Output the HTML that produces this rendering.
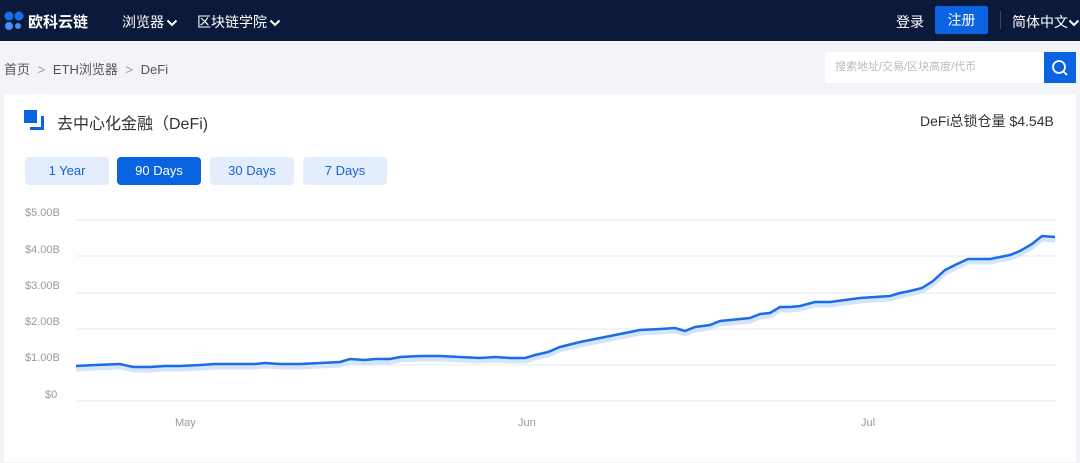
<!DOCTYPE html><html><head><meta charset="utf-8"><style>
*{margin:0;padding:0;box-sizing:border-box}
body{width:1080px;height:463px;background:#f3f4f7;font-family:"Liberation Sans","Noto Sans CJK SC",sans-serif;position:relative;overflow:hidden}
.a{position:absolute;white-space:nowrap}
.ch{display:inline-block;vertical-align:middle;margin-left:2px}
</style></head><body>
<div class="a" style="left:0;top:0;width:1080px;height:41px;background:#0b1a3b"></div>
<svg class="a" style="left:4px;top:11px" width="22" height="20"><circle cx="5" cy="5" r="4.5" fill="#1a6df0"/><circle cx="15" cy="5" r="4.5" fill="#1a6df0"/><circle cx="5" cy="15" r="4" fill="#4a8ff5"/><circle cx="14" cy="15" r="3" fill="#4a8ff5"/></svg>
<div class="a" style="left:28px;top:11px;color:#fff;font-size:15px;font-weight:bold">欧科云链</div>
<div class="a" style="left:122px;top:12px;color:#fff;font-size:14px">浏览器<svg class="ch" width="12" height="10"><path d="M1.5 2.5l4.5 4.5 4.5-4.5" stroke="#fff" stroke-width="2" fill="none"/></svg></div>
<div class="a" style="left:197px;top:12px;color:#fff;font-size:14px">区块链学院<svg class="ch" width="12" height="10"><path d="M1.5 2.5l4.5 4.5 4.5-4.5" stroke="#fff" stroke-width="2" fill="none"/></svg></div>
<div class="a" style="left:896px;top:12px;color:#fff;font-size:14px">登录</div>
<div class="a" style="left:935px;top:6px;width:53px;height:28px;background:#0a63e0;border-radius:2px;color:#fff;font-size:14px;text-align:center;line-height:28px">注册</div>
<div class="a" style="left:1000px;top:11px;width:1px;height:18px;background:#3a4660"></div>
<div class="a" style="left:1012px;top:12px;color:#fff;font-size:14px">简体中文<svg class="ch" width="12" height="10" style="margin-left:0"><path d="M1.5 2.5l4.5 4.5 4.5-4.5" stroke="#fff" stroke-width="2" fill="none"/></svg></div>
<div class="a" style="left:4px;top:59px;color:#555;font-size:13px">首页 <span style="color:#999;margin:0 4px">&gt;</span> ETH浏览器 <span style="color:#999;margin:0 4px">&gt;</span> DeFi</div>
<div class="a" style="left:825px;top:52px;width:219px;height:31px;background:#fff;color:#bbb;font-size:11px;line-height:31px;padding-left:10px">搜索地址/交易/区块高度/代币</div>
<div class="a" style="left:1044px;top:52px;width:32px;height:31px;background:#0a63e0"></div>
<svg class="a" style="left:1050px;top:58px" width="20" height="20"><circle cx="9" cy="9" r="6" stroke="#fff" stroke-width="1.8" fill="none"/><path d="M13 13l4 4" stroke="#fff" stroke-width="1.8"/></svg>
<div class="a" style="left:4px;top:94px;width:1072px;height:368px;background:#fff"></div>
<div class="a" style="left:24px;top:110px;width:13px;height:13px;background:#0a63e0"></div>
<div class="a" style="left:30px;top:116px;width:14px;height:14px;border-right:3px solid #0a63e0;border-bottom:3px solid #0a63e0"></div>
<div class="a" style="left:57px;top:110px;color:#333;font-size:16px">去中心化金融（DeFi)</div>
<div class="a" style="left:920px;top:111px;color:#333;font-size:14px">DeFi总锁仓量 $4.54B</div>
<div class="a" style="left:25px;top:157px;width:84px;height:28px;background:#e3edfb;border-radius:4px;color:#1a63d0;font-size:13px;text-align:center;line-height:28px">1 Year</div>
<div class="a" style="left:117px;top:157px;width:84px;height:28px;background:#0a63e0;border-radius:4px;color:#fff;font-size:13px;text-align:center;line-height:28px">90 Days</div>
<div class="a" style="left:210px;top:157px;width:84px;height:28px;background:#e3edfb;border-radius:4px;color:#1a63d0;font-size:13px;text-align:center;line-height:28px">30 Days</div>
<div class="a" style="left:303px;top:157px;width:84px;height:28px;background:#e3edfb;border-radius:4px;color:#1a63d0;font-size:13px;text-align:center;line-height:28px">7 Days</div>
<svg class="a" style="left:0;top:0" width="1080" height="463" font-family="Liberation Sans" font-size="11" fill="#999">
<g stroke="#eef0f5" stroke-width="1.5"><path d="M76 220H1056M76 256H1056M76 293H1056M76 329H1056M76 365H1056M76 401H1056"/></g>
<text x="25" y="216">$5.00B</text><text x="25" y="253">$4.00B</text><text x="25" y="289">$3.00B</text><text x="25" y="325">$2.00B</text><text x="25" y="361">$1.00B</text><text x="45" y="398">$0</text>
<text x="175" y="426">May</text><text x="518" y="426">Jun</text><text x="861" y="426">Jul</text>
<polyline fill="none" stroke="#d5e4fb" stroke-width="5" transform="translate(0,3)" points="76,366 95,365 120,364 133,367 150,367 165,366 180,366 200,365 215,364 240,364 255,364 265,363 280,364 300,364 320,363 340,362 350,359 365,360 375,359 390,359 400,357 420,356 440,356 460,357 480,358 495,357 510,358 525,358 535,355 548,352 560,347 580,342 600,338 620,334 640,330 660,329 675,328 685,331 695,327 710,325 720,321 740,319 750,318 760,314 770,313 780,307 790,307 800,306 815,302 830,302 845,300 860,298 875,297 890,296 900,293 910,291 922,288 933,281 945,270 955,265 968,259 990,259 1010,255 1020,251 1032,244 1042,236 1055,237"/>
<polyline fill="none" stroke="#1a6de6" stroke-width="2.5" points="76,366 95,365 120,364 133,367 150,367 165,366 180,366 200,365 215,364 240,364 255,364 265,363 280,364 300,364 320,363 340,362 350,359 365,360 375,359 390,359 400,357 420,356 440,356 460,357 480,358 495,357 510,358 525,358 535,355 548,352 560,347 580,342 600,338 620,334 640,330 660,329 675,328 685,331 695,327 710,325 720,321 740,319 750,318 760,314 770,313 780,307 790,307 800,306 815,302 830,302 845,300 860,298 875,297 890,296 900,293 910,291 922,288 933,281 945,270 955,265 968,259 990,259 1010,255 1020,251 1032,244 1042,236 1055,237"/>
</svg>
</body></html>
